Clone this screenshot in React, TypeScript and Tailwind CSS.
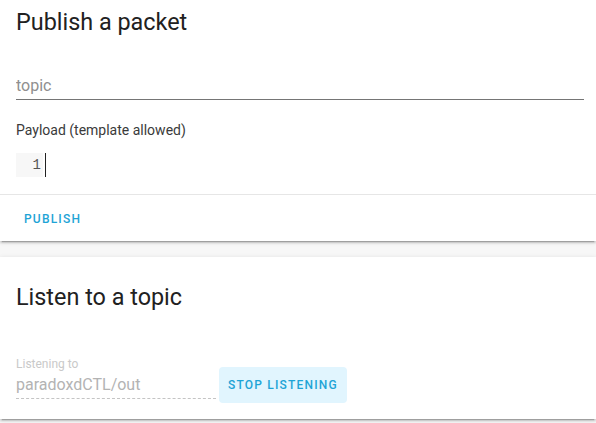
const cardShadow =
  'shadow-[0_2px_2px_0_rgba(0,0,0,0.14),0_1px_5px_0_rgba(0,0,0,0.12),0_3px_1px_-2px_rgba(0,0,0,0.2)]';

const PublishCard = (): JSX.Element => (
  <section className={`bg-white ${cardShadow}`}>
    <div className="px-4 pt-[6px] pb-[17px]">
      <h1 className="text-[23.4px] leading-8 font-normal text-[#212121]">Publish a packet</h1>
      <div className="mt-9 -mr-1 border-b border-[#757575] pb-[1px]">
        <input
          className="block w-full bg-transparent text-base leading-6 text-[#212121] outline-none placeholder:text-[#8f8f8f]"
          placeholder="topic"
        />
      </div>
      <p className="mt-5 text-sm leading-5 text-[#3a3a3a]">Payload (template allowed)</p>
      <div className="mt-[13px] flex h-6">
        <div className="w-[27px] bg-[#f7f7f7] pr-[2px] text-right font-['Liberation_Mono',monospace] text-[14px] leading-6 text-[#555]">
          1
        </div>
        <div className="ml-[2px] w-px bg-[#222]" />
      </div>
    </div>
    <div className="border-t border-[#e6e6e6] px-4 pt-[6px] pb-1">
      <button
        type="button"
        className="h-9 px-2 text-[12px] leading-9 font-medium tracking-[1.2px] text-[#1ea4d6]"
      >
        PUBLISH
      </button>
    </div>
  </section>
);

const ListenCard = (): JSX.Element => (
  <section className={`bg-white ${cardShadow}`}>
    <div className="px-4 pt-6 pb-4">
      <h2 className="text-[23.4px] leading-8 font-normal text-[#212121]">Listen to a topic</h2>
      <div className="mt-[43px] flex items-start">
        <div className="w-[200px]">
          <div className="text-[12px] leading-4 text-[#c9c9c9]">Listening to</div>
          <div className="border-b border-dashed border-[#c4c4c4] py-[1px] text-base leading-6 text-[#b3b3b3]">
            paradoxdCTL/out
          </div>
        </div>
        <button
          type="button"
          className="mt-[11px] ml-[3px] h-9 rounded bg-[#e1f5fe] px-[9px] text-[12px] leading-9 font-medium tracking-[1.2px] text-[#1ea4d6]"
        >
          STOP LISTENING
        </button>
      </div>
    </div>
  </section>
);

const App = (): JSX.Element => (
  <div className="min-h-screen bg-[#f7f7f7] font-['Roboto',sans-serif]">
    <PublishCard />
    <div className="h-4" />
    <ListenCard />
  </div>
);

export default App;
